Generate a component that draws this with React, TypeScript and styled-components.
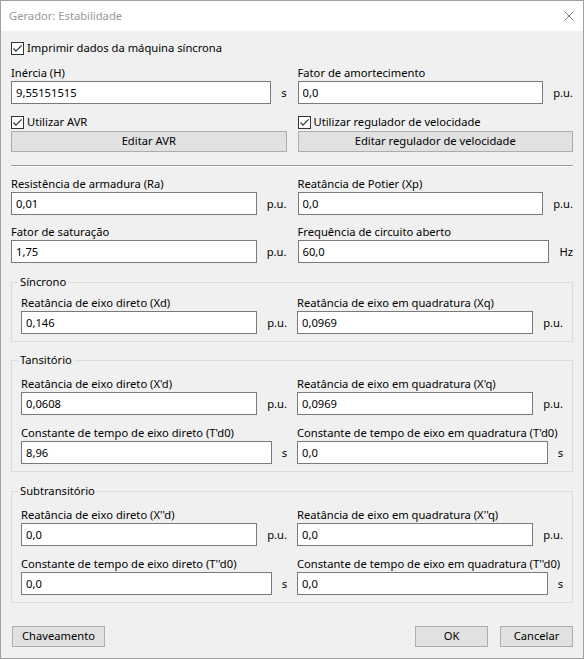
import React from "react";
import styled, { createGlobalStyle } from "styled-components";

const GlobalStyle = createGlobalStyle`
  html, body {
    margin: 0;
    padding: 0;
    background: #ffffff;
  }
  body {
    font-family: "Noto Sans", "Open Sans", sans-serif;
    font-size: 11.2px;
    line-height: 16px;
    color: #000000;
  }
  * {
    box-sizing: border-box;
  }
`;

const Window = styled.div`
  width: 584px;
  height: 659px;
  border: 1px solid #a0a0a0;
  display: flex;
  flex-direction: column;
`;

const TitleBar = styled.div`
  height: 30px;
  flex: none;
  background: #ffffff;
  display: flex;
  align-items: center;
  justify-content: space-between;
  padding: 0 9px 0 8px;
`;

const Title = styled.span`
  color: #999999;
  font-size: 11.2px;
  padding-bottom: 1px;
`;

const CloseGlyph = styled.svg`
  width: 10px;
  height: 10px;
  display: block;
  margin-bottom: 1px;
`;

const Body = styled.div`
  flex: 1;
  background: #f0f0f0;
  padding: 9px 10px 11px 10px;
  display: flex;
  flex-direction: column;
`;

const CheckRow = styled.label<{ $mt?: number }>`
  display: flex;
  align-items: center;
  height: 16px;
  margin-top: ${(p) => p.$mt ?? 0}px;
  white-space: nowrap;
`;

const Box = styled.span`
  width: 13px;
  height: 13px;
  flex: none;
  border: 1px solid #333333;
  background: #ffffff;
  display: flex;
  align-items: center;
  justify-content: center;
  margin-right: 3px;
`;

const Columns = styled.div<{ $mt?: number; $gap?: number }>`
  display: grid;
  grid-template-columns: 1fr 1fr;
  column-gap: ${(p) => p.$gap ?? 11}px;
  row-gap: 9px;
  margin-top: ${(p) => p.$mt ?? 0}px;
`;

const Column = styled.div`
  display: flex;
  flex-direction: column;
  min-width: 0;
`;

const FieldLabel = styled.div`
  height: 16px;
  padding-top: 1px;
  margin-bottom: 1px;
  white-space: nowrap;
`;

const FieldLine = styled.div`
  display: flex;
  align-items: center;
`;

const TextInput = styled.input`
  flex: 1;
  min-width: 0;
  height: 23px;
  border: 1px solid #7a7a7a;
  background: #ffffff;
  padding: 0 0 1px 4px;
  margin: 0;
  font: inherit;
  color: #000000;
  outline: none;
`;

const Unit = styled.span`
  margin-left: 10px;
  white-space: nowrap;
  text-align: right;
`;

const Button = styled.button<{ $w?: number }>`
  height: 21px;
  width: ${(p) => (p.$w ? `${p.$w}px` : "100%")};
  background: #e1e1e1;
  border: 1px solid #adadad;
  font: inherit;
  color: #000000;
  padding: 0 0 1px 0;
  margin: 0;
  cursor: default;
`;

const WideButton = styled(Button)`
  margin-top: 1px;
`;

const Separator = styled.div`
  margin-top: 13px;
  height: 2px;
  border-top: 1px solid #a0a0a0;
  border-bottom: 1px solid #ffffff;
`;

const Group = styled.fieldset<{ $mt: number; $pt: number }>`
  margin: ${(p) => p.$mt}px 0 0 0;
  min-width: 0;
  border: 1px solid #dcdcdc;
  padding: ${(p) => p.$pt}px 9px 7px 9px;
`;

const GroupTitle = styled.legend`
  padding: 0 2px;
  margin-left: -3px;
  line-height: 16px;
  height: 16px;
`;

const Footer = styled.div`
  margin-top: auto;
  display: flex;
  align-items: center;
  padding-left: 1px;
`;

const FooterRight = styled.div`
  margin-left: auto;
  display: flex;
  gap: 12px;
`;

function Check({ label, mt }: { label: string; mt?: number }) {
  return (
    <CheckRow $mt={mt}>
      <Box>
        <svg width="11" height="11" viewBox="0 0 11 11">
          <polyline points="1.5,5.5 4,8.2 9.6,2.4" fill="none" stroke="#333333" strokeWidth="1.2" />
        </svg>
      </Box>
      {label}
    </CheckRow>
  );
}

function Field({ label, value, unit }: { label: string; value: string; unit: string }) {
  return (
    <Column>
      <FieldLabel>{label}</FieldLabel>
      <FieldLine>
        <TextInput defaultValue={value} />
        <Unit>{unit}</Unit>
      </FieldLine>
    </Column>
  );
}

export default function App() {
  return (
    <>
      <GlobalStyle />
      <Window>
        <TitleBar>
          <Title>Gerador: Estabilidade</Title>
          <CloseGlyph viewBox="0 0 10 10">
            <path d="M0.5 0.5 L9.5 9.5 M9.5 0.5 L0.5 9.5" stroke="#7a7a7a" strokeWidth="1" />
          </CloseGlyph>
        </TitleBar>
        <Body>
          <Check label="Imprimir dados da máquina síncrona" />

          <Columns $mt={8}>
            <Field label="Inércia (H)" value="9,55151515" unit="s" />
            <Field label="Fator de amortecimento" value="0,0" unit="p.u." />
          </Columns>

          <Columns $mt={10}>
            <Column>
              <Check label="Utilizar AVR" />
              <WideButton>Editar AVR</WideButton>
            </Column>
            <Column>
              <Check label="Utilizar regulador de velocidade" />
              <WideButton>Editar regulador de velocidade</WideButton>
            </Column>
          </Columns>

          <Separator />

          <Columns $mt={8}>
            <Field label="Resistência de armadura (Ra)" value="0,01" unit="p.u." />
            <Field label="Reatância de Potier (Xp)" value="0,0" unit="p.u." />
          </Columns>
          <Columns $mt={8}>
            <Field label="Fator de saturação" value="1,75" unit="p.u." />
            <Field label="Frequência de circuito aberto" value="60,0" unit="Hz" />
          </Columns>

          <Group $mt={11} $pt={4}>
            <GroupTitle>Síncrono</GroupTitle>
            <Columns $gap={10}>
              <Field label="Reatância de eixo direto (Xd)" value="0,146" unit="p.u." />
              <Field label="Reatância de eixo em quadratura (Xq)" value="0,0969" unit="p.u." />
            </Columns>
          </Group>

          <Group $mt={10} $pt={7}>
            <GroupTitle>Tansitório</GroupTitle>
            <Columns $gap={10}>
              <Field label="Reatância de eixo direto (X'd)" value="0,0608" unit="p.u." />
              <Field label="Reatância de eixo em quadratura (X'q)" value="0,0969" unit="p.u." />
              <Field label="Constante de tempo de eixo direto (T'd0)" value="8,96" unit="s" />
              <Field label="Constante de tempo de eixo em quadratura (T'd0)" value="0,0" unit="s" />
            </Columns>
          </Group>

          <Group $mt={11} $pt={7}>
            <GroupTitle>Subtransitório</GroupTitle>
            <Columns $gap={10}>
              <Field label="Reatância de eixo direto (X''d)" value="0,0" unit="p.u." />
              <Field label="Reatância de eixo em quadratura (X''q)" value="0,0" unit="p.u." />
              <Field label="Constante de tempo de eixo direto (T''d0)" value="0,0" unit="s" />
              <Field label="Constante de tempo de eixo em quadratura (T''d0)" value="0,0" unit="s" />
            </Columns>
          </Group>

          <Footer>
            <Button $w={93}>Chaveamento</Button>
            <FooterRight>
              <Button $w={73}>OK</Button>
              <Button $w={73}>Cancelar</Button>
            </FooterRight>
          </Footer>
        </Body>
      </Window>
    </>
  );
}
